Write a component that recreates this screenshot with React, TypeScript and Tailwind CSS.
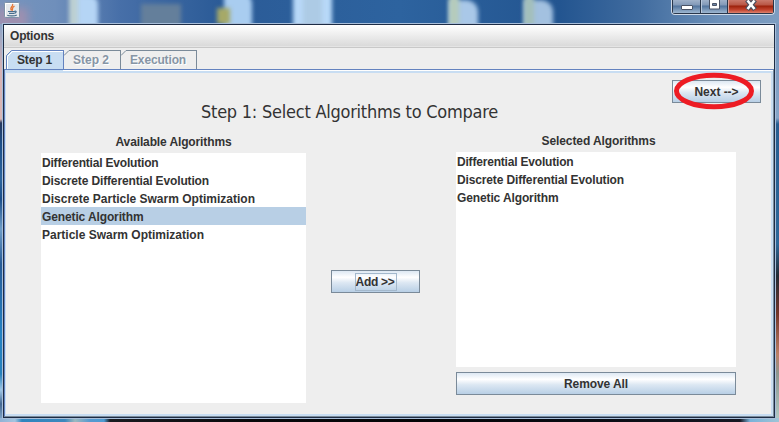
import React from "react";

const FONT = "font-['Liberation_Sans',Arial,sans-serif]";

const available = [
  { name: "Differential Evolution", width: 116.5 },
  { name: "Discrete Differential Evolution", width: 167 },
  { name: "Discrete Particle Swarm Optimization", width: 213 },
  { name: "Genetic Algorithm", width: 101.5, selected: true },
  { name: "Particle Swarm Optimization", width: 162 },
];
const chosen = available.filter((_, i) => i === 0 || i === 1 || i === 3);

function Desktop() {
  return (
    <div className="absolute inset-0 overflow-hidden bg-[linear-gradient(90deg,#7794bd_0px,#6f8fbb_55px,#476fa8_120px,#2b5b97_220px,#2d639f_400px,#235590_560px,#416c9f_640px,#6c90b9_720px,#7d9dc1_779px)]">
      <div className="absolute -left-1 top-2 h-24 w-8 bg-[#b98fa8] opacity-60 blur-[4px]" />
      <div className="absolute left-[69px] -top-2 h-9 w-[14px] bg-[#bdd0d3] blur-[2px]" />
      <div className="absolute left-[78px] -top-1 h-9 w-[20px] rounded-tr-lg bg-[#b5d5f5] blur-[2px]" />
      <div className="absolute left-[141px] top-1 h-7 w-[40px] bg-[#647f9b] blur-[2px]" />
      <div className="absolute left-[224px] -top-2 h-9 w-[28px] rounded-tr-xl bg-[#a9cdf0] blur-[2px]" />
      <div className="absolute left-[217px] top-2 h-4 w-[13px] bg-[#a6a968] blur-[2px]" />
      <div className="absolute left-[293px] -top-2 h-9 w-[39px] bg-[#b8d9f8] blur-[2px]" />
      <div className="absolute left-[303px] -top-2 h-9 w-[19px] bg-[#adcbe5] blur-[2px]" />
      <div className="absolute left-[449px] top-0 h-7 w-[29px] rounded-tr-xl bg-[#a9c8e8] blur-[2px]" />
      <div className="absolute left-[449px] -top-1 h-8 w-[10px] bg-[#b5cbbb] blur-[2px]" />
      <div className="absolute left-[524px] top-0 h-7 w-[29px] rounded-tr-xl bg-[#a3c1e0] blur-[2px]" />
      <div className="absolute left-[524px] -top-1 h-8 w-[10px] bg-[#a3bfba] blur-[2px]" />
      <div className="absolute left-0 top-[24px] h-[398px] w-[3px] bg-[linear-gradient(180deg,#8ba4c8_0px,#d6b2b5_45px,#d9b7b6_95px,#26395f_99px,#1c4f8a_120px,#2c659f_155px,#1a4e8c_175px,#6d9dc9_205px,#265b98_240px,#2382c4_310px,#2681bd_350px,#9fc7e7_366px,#446893_380px,#8aafd1_398px)]" />
      <div className="absolute right-0 top-[24px] h-[398px] w-[4px] bg-[linear-gradient(180deg,#7897bd_0px,#85a4c8_94px,#275d91_100px,#2d6799_220px,#232b35_252px,#74362a_290px,#bc8067_330px,#8d9790_350px,#b3cbc7_398px)]" />
      <div className="absolute bottom-0 left-0 h-[4px] w-full bg-[linear-gradient(90deg,#91b2d5_0px,#a4c5df_15px,#2f85be_22px,#3d88bd_65px,#9cb9bf_75px,#5799cf_90px,#4d9bd2_104px,#191b20_110px,#08090b_250px,#030406_420px,#090c13_600px,#151722_740px,#79b2d9_750px,#a0c4d6_779px)]" />
    </div>
  );
}

function JavaIcon() {
  return (
    <svg className="ml-1 mt-[2px] h-4 w-4 shrink-0" viewBox="0 0 16 16" fill="none">
      <rect x=".5" y=".5" width="15" height="15" rx="1" fill="#e4e9ed" stroke="#7e92a8" />
      <path d="M1.5 14V1.5H14" stroke="#fff" />
      <path d="M8.5 2C10 4 5 5.2 7.5 8.5M10.5 4.2C7.5 5.5 9 6.5 8.2 8.7" stroke="#e87532" strokeWidth="1.3" />
      <path d="M4 9.5h6.5M5 11.3h5M10.5 9.3c2.5-.7 2 1.8-.3 2M3.3 13.3c2 .9 7.5.9 9.5-.4" stroke="#476e8c" strokeWidth="1.2" />
    </svg>
  );
}

function WindowControls() {
  return (
    <div className="mr-[4px] flex h-[15px] w-[104px] overflow-hidden rounded-b-[4px] border border-t-0 border-[#d0dae8] bg-[#29364a] px-px pb-px">
      <div className="flex w-[27px] justify-center bg-[linear-gradient(#9fb1c9_0px,#8299b8_5px,#52749d_6px,#9eb7d1_13px)]">
        <svg width="14" height="13"><rect x="1.5" y="5.5" width="11" height="4" rx=".5" fill="#fff" stroke="#4a5366" /></svg>
      </div>
      <div className="ml-px flex w-[26px] justify-center border-l border-[#b9c8dc] bg-[linear-gradient(#9fb1c9_0px,#8299b8_5px,#52749d_6px,#9eb7d1_13px)]">
        <svg width="14" height="13"><path d="M1.5 -1h10v10h-10z" fill="#fff" stroke="#4a5366" /><path d="M4.5 3.5h4v2h-4z" fill="#6b84a5" stroke="#4a5366" /></svg>
      </div>
      <div className="ml-px flex flex-1 justify-center border-l border-[#dc9f95] bg-[linear-gradient(#ca796b_0px,#b95645_5px,#9c210b_6px,#c44631_10px,#dc8370_13px)]">
        <svg width="14" height="13"><path d="M3 0l8 9.5M11 0l-8 9.5" stroke="#4a4e5d" strokeWidth="5" /><path d="M3.5 .5l7 8.5M10.5 .5l-7 8.5" stroke="#fff" strokeWidth="2.6" /></svg>
      </div>
    </div>
  );
}

// Text stretched to the advance width of the Swing label font.
function Fit({ children, width, className = "" }: { children: string; width: number; className?: string }) {
  const ref = React.useRef<HTMLSpanElement>(null);
  React.useLayoutEffect(() => {
    const el = ref.current!;
    el.style.letterSpacing = "0px";
    el.style.letterSpacing = `${(width - el.getBoundingClientRect().width) / children.length}px`;
  }, [children, width]);
  return <span ref={ref} className={`inline-block whitespace-pre ${className}`}>{children}</span>;
}

function Tab({ label, width, textWidth, active }: { label: string; width: string; textWidth: number; active?: boolean }) {
  const stroke = active ? "#6382bf" : "#7a8a99";
  return (
    <div className={`flex h-full ${width}`}>
      <svg className="h-[19px] w-[6px] shrink-0" viewBox="0 0 6 19">
        {active && <path d="M0 6L6 0V19H0z" fill="#c8ddf2" />}
        <path d={active ? "M.5 19V5.5L5.5 .5H6" : "M0 5.5L5 .5H6"} fill="none" stroke={stroke} />
        {active && <path d="M1.5 19V6.5L6 2" fill="none" stroke="#fff" />}
      </svg>
      <div className={`flex-1 border-r border-t ${active ? "border-[#6382bf] bg-[#c8ddf2] pl-[5px] text-[#333] shadow-[inset_0_1px_0_#fff]" : "border-[#7a8a99] pl-[3px] text-[#8695a5] [text-shadow:1px_1px_0_#fff]"}`}>
        <Fit width={textWidth} className={active ? "leading-[17px]" : "leading-[15px]"}>{label}</Fit>
      </div>
    </div>
  );
}

function Button({ label, width, textWidth, focused }: { label: string; width: string; textWidth: number; focused?: boolean }) {
  return (
    <button className={`flex h-[23px] shrink-0 items-center justify-center border border-[#7a8a99] bg-[linear-gradient(#dde8f3_0%,#fff_30%,#dde8f3_55%,#b8cfe5_100%)] font-bold ${width}`}>
      <span className={`flex h-[18px] items-center px-px leading-[18px] ${focused ? "border border-[#a3b8cc] pl-0" : ""}`}>
        <Fit width={textWidth}>{label}</Fit>
      </span>
    </button>
  );
}

function List({ items, size, highlight }: { items: typeof available; size: string; highlight?: boolean }) {
  return (
    <ul className={`bg-white ${size}`}>
      {items.map((item) => (
        <li key={item.name} className={`h-[18px] pl-px leading-[20px] ${highlight && item.selected ? "bg-[#b8cfe5]" : ""}`}>
          <Fit width={item.width}>{item.name}</Fit>
        </li>
      ))}
    </ul>
  );
}

export default function App() {
  return (
    <div className={`relative isolate h-[422px] w-[779px] overflow-hidden text-[12px] font-bold text-[#333] ${FONT}`}>
      <Desktop />
      <div className="relative flex h-full flex-col">
        <header className="flex h-[23px] shrink-0 items-start justify-between">
          <JavaIcon />
          <WindowControls />
        </header>
        <main className="ml-[2px] h-[396px] w-[774px] border border-[#a9bfda] bg-[#eee]">
          <div className="flex h-full flex-col border border-[#1d2c45]">
            <nav className="h-[23px] shrink-0 border-b border-[#c8c8c8] bg-[linear-gradient(#fff,#dadada_21px,#eee_22px)] pl-[6px] leading-[22px]">
              <Fit width={44}>Options</Fit>
            </nav>
            <div className="flex h-[21px] shrink-0 pl-[2px] pt-[2px]">
              <Tab label="Step 1" width="w-[58px]" textWidth={35} active />
              <Tab label="Step 2" width="w-[57px]" textWidth={36} />
              <Tab label="Execution" width="w-[76px]" textWidth={56} />
            </div>
            <div className="flex min-h-0 flex-1 flex-col border border-b-[#7a8a99] border-l-[#6382bf] border-r-[#7a8a99] border-t-[#6382bf]">
              <div className="flex h-px shrink-0 bg-white"><span className="w-[58px] bg-[#c8ddf2]" /></div>
              <section className="min-h-0 flex-1 border-2 border-l border-[#c8ddf2]">
                <div className="flex justify-end pr-[10px] pt-[7px]">
                  <div className="relative">
                    <Button label="Next -->" width="w-[89px]" textWidth={44} />
                    <svg className="pointer-events-none absolute -top-[8px] left-px h-[38px] w-[83px]" viewBox="0 0 83 38">
                      <ellipse cx="41" cy="19" rx="37.5" ry="15.7" fill="none" stroke="#ed1c24" strokeWidth="5" />
                    </svg>
                  </div>
                </div>
                <h1 className="h-5 pl-[195px] font-['DejaVu_Sans_Condensed','DejaVu_Sans',sans-serif] text-[18px] font-normal leading-[17px] [font-stretch:condensed]">
                  <Fit width={297}>Step 1: Select Algorithms to Compare</Fit>
                </h1>
                <div className="flex pl-[35px]">
                  <div className="w-[265px] pt-[10px]">
                    <h2 className="h-5 text-center leading-[18px]"><Fit width={116}>Available Algorithms</Fit></h2>
                    <List items={available} size="h-[250px]" highlight />
                  </div>
                  <div className="ml-[25px] pt-[147px]">
                    <Button label="Add >>" width="w-[89px]" textWidth={39} focused />
                  </div>
                  <div className="ml-[36px] w-[280px] pt-[9px]">
                    <h2 className="h-5 pl-[5px] text-center leading-[18px]"><Fit width={114}>Selected Algorithms</Fit></h2>
                    <List items={chosen} size="mb-[5px] h-[215px]" />
                    <Button label="Remove All" width="w-full" textWidth={64} />
                  </div>
                </div>
              </section>
            </div>
          </div>
        </main>
      </div>
    </div>
  );
}
